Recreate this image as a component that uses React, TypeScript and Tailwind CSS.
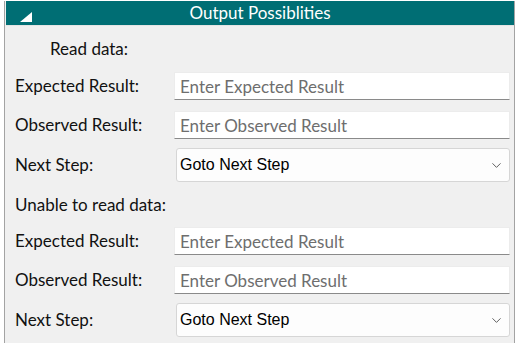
import { ChevronDown } from "lucide-react";

const labelFont = { fontFamily: "Lato, 'Noto Sans', sans-serif" };

function TextRow({ label, placeholder, className = "" }: { label: string; placeholder: string; className?: string }) {
  return (
    <div className={`flex items-center ${className}`}>
      <div className="w-[159px] shrink-0 text-[17px] text-[#111]">{label}</div>
      <input
        placeholder={placeholder}
        className="h-[28px] w-[336px] shrink-0 border border-[#ececec] border-b-[#8a8a8a] bg-white px-[5px] text-[17px] text-[#222] outline-none placeholder:text-[#6e6e6e]"
        style={labelFont}
      />
    </div>
  );
}

function SelectRow({ className = "" }: { className?: string }) {
  return (
    <div className={`flex items-center ${className}`}>
      <div className="w-[161px] shrink-0 text-[17px] text-[#111]">Next Step:</div>
      <div className="flex h-[34px] w-[334px] shrink-0 items-center justify-between rounded-[3px] border border-[#d6d6d6] bg-[#fdfdfd] pl-[3px] pr-[5px]">
        <span className="text-[16px] text-black" style={{ fontFamily: "'Liberation Sans', Arial, sans-serif" }}>
          Goto Next Step
        </span>
        <ChevronDown size={15} strokeWidth={1.3} className="text-[#3a3a3a]" />
      </div>
    </div>
  );
}

export default function App() {
  return (
    <div className="h-[343px] w-[515px] bg-white pl-[4px] pt-[1px]" style={labelFont}>
      <div className="h-[342px] w-[511px] border-x border-[#a3a3a3] bg-[#f0f0f0]">
        <div className="relative ml-px flex h-[25px] items-center justify-center border-b border-[#e4e4e4] bg-[#006e74]">
          <svg className="absolute left-[14px] top-[11px]" width="12" height="10" viewBox="0 0 12 10">
            <polygon points="12,0 12,10 0,10" fill="white" />
          </svg>
          <span className="text-[17px] text-white">Output Possiblities</span>
        </div>

        <div className="pl-[10px] pr-[3px]">
          <div className="mt-[11px] flex h-[24px] items-center pl-[35px] text-[17px] text-[#111]">Read data:</div>
          <TextRow className="mt-[11px]" label="Expected Result:" placeholder="Enter Expected Result" />
          <TextRow className="mt-[11px]" label="Observed Result:" placeholder="Enter Observed Result" />
          <SelectRow className="mt-[9px]" />

          <div className="mt-[11px] flex h-[24px] items-center text-[17px] text-[#111]">Unable to read data:</div>
          <TextRow className="mt-[10px]" label="Expected Result:" placeholder="Enter Expected Result" />
          <TextRow className="mt-[11px]" label="Observed Result:" placeholder="Enter Observed Result" />
          <SelectRow className="mt-[9px]" />
        </div>
      </div>
    </div>
  );
}
